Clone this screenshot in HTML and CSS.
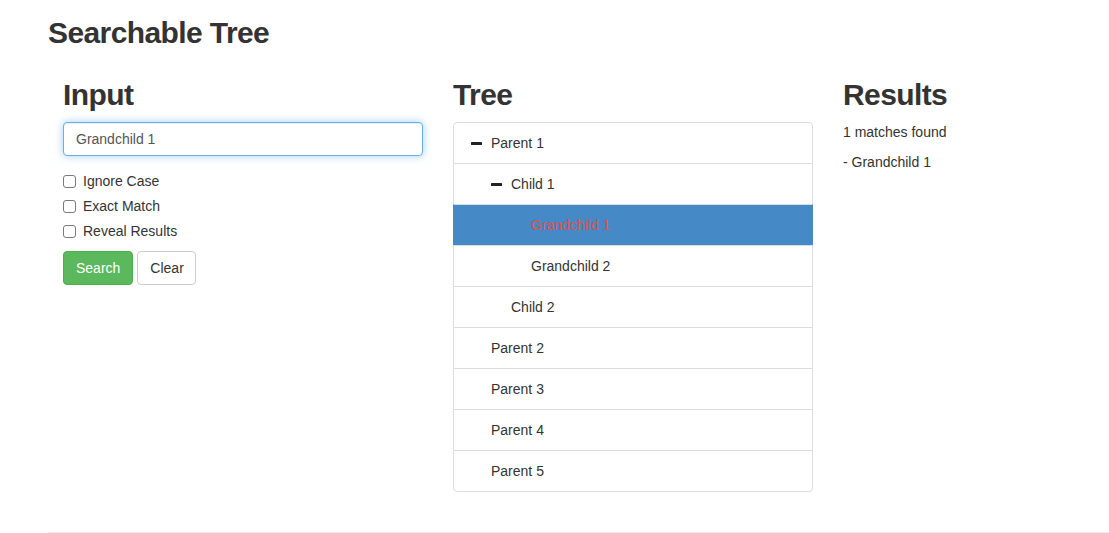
FILE: index.html
```html
<!DOCTYPE html>
<html lang="en">
<head>
<meta charset="utf-8">
<title>Searchable Tree</title>
<link rel="stylesheet" href="styles.css">
</head>
<body>
<div class="page">
  <h1 class="title">Searchable Tree</h1>
  <div class="row">
    <div class="col">
      <h2 class="col-title">Input</h2>
      <input class="search-input" type="text" value="Grandchild 1">
      <div class="checks">
        <label class="check"><input type="checkbox" class="box"><span>Ignore Case</span></label>
        <label class="check"><input type="checkbox" class="box"><span>Exact Match</span></label>
        <label class="check"><input type="checkbox" class="box"><span>Reveal Results</span></label>
      </div>
      <div class="actions">
        <button class="btn btn-success" type="button">Search</button>
        <button class="btn btn-default" type="button">Clear</button>
      </div>
    </div>
    <div class="col">
      <h2 class="col-title">Tree</h2>
      <ul class="tree">
        <li class="node lvl0"><span class="icon"><span class="minus"></span></span><span>Parent 1</span></li>
        <li class="node lvl1"><span class="icon"><span class="minus"></span></span><span>Child 1</span></li>
        <li class="node lvl2 selected"><span class="icon"></span><span class="match">Grandchild 1</span></li>
        <li class="node lvl2"><span class="icon"></span><span>Grandchild 2</span></li>
        <li class="node lvl1"><span class="icon"></span><span>Child 2</span></li>
        <li class="node lvl0"><span class="icon"></span><span>Parent 2</span></li>
        <li class="node lvl0"><span class="icon"></span><span>Parent 3</span></li>
        <li class="node lvl0"><span class="icon"></span><span>Parent 4</span></li>
        <li class="node lvl0"><span class="icon"></span><span>Parent 5</span></li>
      </ul>
    </div>
    <div class="col">
      <h2 class="col-title">Results</h2>
      <p class="result">1 matches found</p>
      <p class="result">- Grandchild 1</p>
    </div>
  </div>
  <hr class="rule">
</div>
</body>
</html>
```

FILE: styles.css
```css
* { box-sizing: border-box; }

html, body {
  margin: 0;
  padding: 0;
  background: #fff;
}

body {
  font-family: "Liberation Sans", Arial, Helvetica, sans-serif;
  font-size: 14px;
  line-height: 20px;
  color: #333;
}

.page {
  padding-left: 48px;
  padding-top: 16px;
}

.title {
  margin: 0;
  font-size: 30px;
  line-height: 33px;
  font-weight: 700;
  letter-spacing: -0.6px;
  color: #333;
}

.row {
  display: grid;
  grid-template-columns: 390px 390px 1fr;
  margin-top: 29px;
}

.col {
  padding: 0 15px;
}

.col-title {
  margin: 0 0 11px;
  font-size: 30px;
  line-height: 33px;
  font-weight: 700;
  letter-spacing: -0.6px;
  color: #333;
}

.search-input {
  display: block;
  width: 100%;
  height: 34px;
  padding: 6px 12px;
  font-family: inherit;
  font-size: 14px;
  line-height: 20px;
  color: #555;
  background: #fff;
  border: 1px solid #66afe9;
  border-radius: 4px;
  outline: 0;
  box-shadow: inset 0 1px 1px rgba(0,0,0,.075), 0 0 8px rgba(102,175,233,.6);
}

.checks {
  display: flex;
  flex-direction: column;
  gap: 5px;
  margin-top: 15px;
}

.check {
  display: flex;
  align-items: center;
  height: 20px;
  cursor: pointer;
}

.box {
  appearance: none;
  -webkit-appearance: none;
  width: 13px;
  height: 13px;
  margin: 0 7px 0 0;
  border: 1px solid #7a7a7a;
  border-radius: 3px;
  background: #fff;
}

.actions {
  display: flex;
  gap: 4px;
  margin-top: 10px;
}

.btn {
  height: 34px;
  padding: 6px 12px;
  font-family: inherit;
  font-size: 14px;
  line-height: 20px;
  border: 1px solid transparent;
  border-radius: 4px;
  cursor: pointer;
}

.btn-success {
  color: #fff;
  background: #5cb85c;
  border-color: #4cae4c;
}

.btn-default {
  color: #333;
  background: #fff;
  border-color: #ccc;
  padding: 6px 11px 6px 12px;
}

.tree {
  list-style: none;
  margin: 0;
  padding: 0;
  width: 360px;
}

.node {
  display: flex;
  align-items: center;
  height: 42px;
  padding: 10px 15px;
  margin-bottom: -1px;
  border: 1px solid #ddd;
  background: #fff;
  color: #333;
}

.node:first-child {
  border-top-left-radius: 4px;
  border-top-right-radius: 4px;
}

.node:last-child {
  border-bottom-left-radius: 4px;
  border-bottom-right-radius: 4px;
}

.lvl1 { padding-left: 35px; }
.lvl2 { padding-left: 55px; }

.icon {
  display: flex;
  align-items: center;
  width: 22px;
  height: 20px;
  flex: none;
}

.minus {
  display: block;
  width: 11px;
  height: 3px;
  margin-left: 2px;
  margin-top: 1px;
  background: #222;
  border-radius: 0.5px;
}

.node.selected {
  background: #4589c6;
  border-left-color: #4589c6;
  border-right-color: #4589c6;
}

.match {
  color: #d9534f;
}

.result {
  margin: 0 0 10px;
}

.rule {
  margin: 41px 0 0;
  border: 0;
  border-top: 1px solid #eee;
  height: 0;
}
```
